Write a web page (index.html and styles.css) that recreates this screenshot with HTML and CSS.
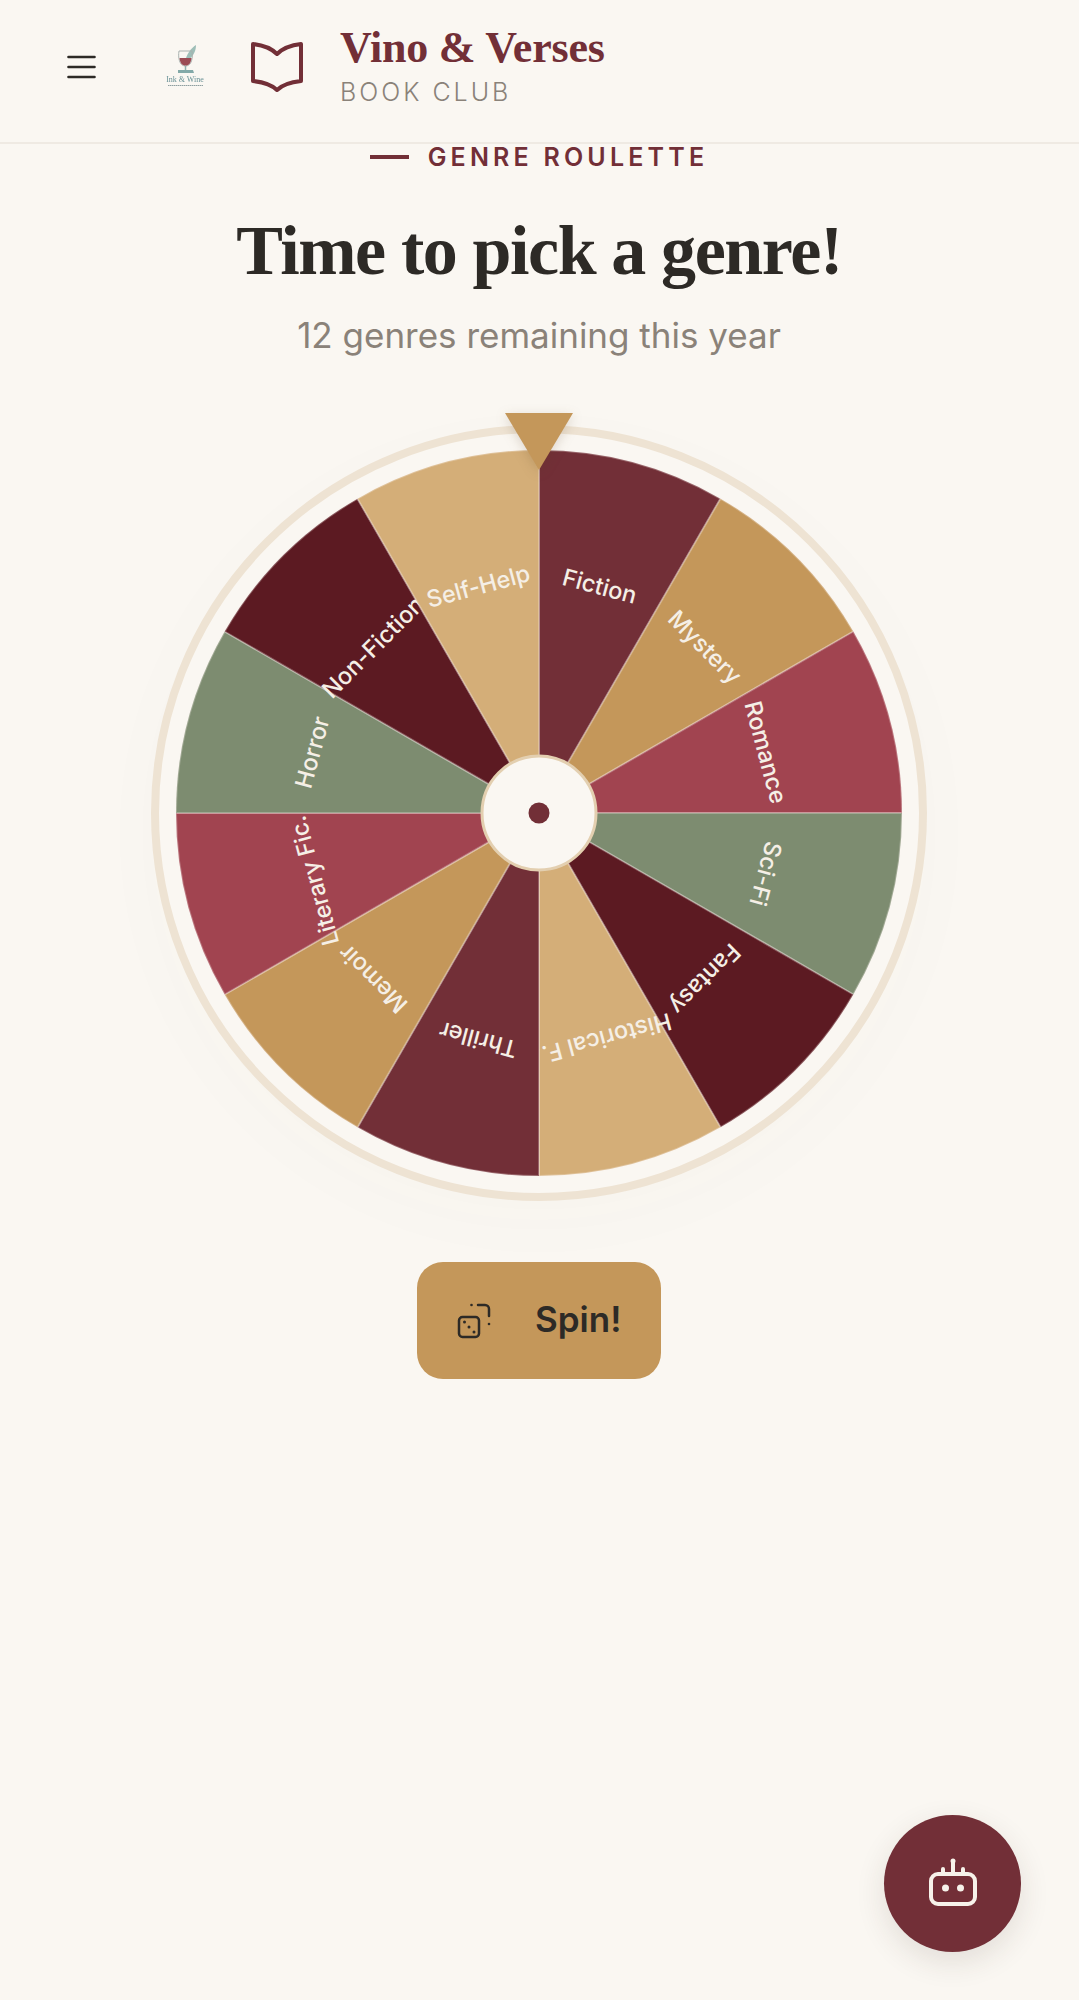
FILE: index.html
```html
<!DOCTYPE html>
<html lang="en">
<head>
<meta charset="utf-8">
<title>Vino &amp; Verses Book Club</title>
<link rel="stylesheet" href="styles.css">
</head>
<body>
<header class="topbar">
  <button class="menu" aria-label="Menu">
    <svg width="29" height="24" viewBox="0 0 29 24"><path d="M1.5 2H27.5M1.5 12H27.5M1.5 22H27.5"/></svg>
  </button>
  <div class="brand">
    <svg class="logo" width="50" height="48" viewBox="0 0 50 48">
      <path class="quill" d="M25 20C26 13 31 6 36 3C36 9 33 16 25 20Z"/>
      <path class="glass" d="M19 9H32C33 15 32 24 25.500 24C19 24 18 15 19 9Z"/>
      <path class="wine" d="M19.500 16H31.500C31 21 29 23.500 25.500 23.500C22 23.500 20 21 19.500 16Z"/>
      <path class="stem" d="M25.500 24V28"/>
      <path class="base" d="M18 28H33L34 31H18Z"/>
      <text class="logo-name" x="25" y="40">Ink &amp; Wine</text>
      <path class="logo-tag" d="M8 43.500H43"/>
    </svg>
    <svg class="book" width="52" height="52" viewBox="0 0 52 52"><path d="M2 4C11 5 20 8 26 14C32 8 41 5 50 4V41C41 42 32 44 26 50C20 44 11 42 2 41Z"/></svg>
    <div class="brand-text">
      <div class="brand-name">Vino &amp; Verses</div>
      <div class="brand-sub">BOOK CLUB</div>
    </div>
  </div>
</header>
<main class="page">
  <div class="eyebrow"><span class="dash"></span>GENRE ROULETTE</div>
  <h1 class="title">Time to pick a genre!</h1>
  <p class="subtitle">12 genres remaining this year</p>
  <div class="wheel-ring">
    <svg class="pointer" width="68" height="57" viewBox="0 0 68 57"><path d="M0 0H68L34 57Z"/></svg>
    <svg class="wheel" width="728" height="728" viewBox="-364 -364 728 728">
      <g><path class="seg c1" d="M0 0V-363A363 363 0 0 1 181.500 -314.370Z"/><text class="lab" transform="rotate(15) translate(0 -235)">Fiction</text></g>
      <g transform="rotate(30)"><path class="seg c2" d="M0 0V-363A363 363 0 0 1 181.500 -314.370Z"/><text class="lab" transform="rotate(15) translate(0 -235)">Mystery</text></g>
      <g transform="rotate(60)"><path class="seg c3" d="M0 0V-363A363 363 0 0 1 181.500 -314.370Z"/><text class="lab" transform="rotate(15) translate(0 -235)">Romance</text></g>
      <g transform="rotate(90)"><path class="seg c4" d="M0 0V-363A363 363 0 0 1 181.500 -314.370Z"/><text class="lab" transform="rotate(15) translate(0 -235)">Sci-Fi</text></g>
      <g transform="rotate(120)"><path class="seg c5" d="M0 0V-363A363 363 0 0 1 181.500 -314.370Z"/><text class="lab" transform="rotate(15) translate(0 -235)">Fantasy</text></g>
      <g transform="rotate(150)"><path class="seg c6" d="M0 0V-363A363 363 0 0 1 181.500 -314.370Z"/><text class="lab" transform="rotate(15) translate(0 -235)">Historical F...</text></g>
      <g transform="rotate(180)"><path class="seg c1" d="M0 0V-363A363 363 0 0 1 181.500 -314.370Z"/><text class="lab" transform="rotate(15) translate(0 -235)">Thriller</text></g>
      <g transform="rotate(210)"><path class="seg c2" d="M0 0V-363A363 363 0 0 1 181.500 -314.370Z"/><text class="lab" transform="rotate(15) translate(0 -235)">Memoir</text></g>
      <g transform="rotate(240)"><path class="seg c3" d="M0 0V-363A363 363 0 0 1 181.500 -314.370Z"/><text class="lab" transform="rotate(15) translate(0 -235)">Literary Fic...</text></g>
      <g transform="rotate(270)"><path class="seg c4" d="M0 0V-363A363 363 0 0 1 181.500 -314.370Z"/><text class="lab" transform="rotate(15) translate(0 -235)">Horror</text></g>
      <g transform="rotate(300)"><path class="seg c5" d="M0 0V-363A363 363 0 0 1 181.500 -314.370Z"/><text class="lab" transform="rotate(15) translate(0 -235)">Non-Fiction</text></g>
      <g transform="rotate(330)"><path class="seg c6" d="M0 0V-363A363 363 0 0 1 181.500 -314.370Z"/><text class="lab" transform="rotate(15) translate(0 -235)">Self-Help</text></g>
      <circle class="hub" r="57"/>
      <circle class="hub-dot" r="10.500"/>
    </svg>
  </div>
  <button class="spin">
    <svg class="dice" width="36" height="38" viewBox="0 0 36 38">
      <rect class="dice-line" x="3" y="15" width="20" height="20" rx="3.500"/>
      <path class="dice-line" d="M22 3H29A4 4 0 0 1 33 7V14"/>
      <circle class="dice-dot" cx="8.500" cy="20" r="1.500"/>
      <circle class="dice-dot" cx="13" cy="25" r="1.500"/>
      <circle class="dice-dot" cx="18" cy="30" r="1.500"/>
      <circle class="dice-dot" cx="15.500" cy="3" r="1.300"/>
      <circle class="dice-dot" cx="33" cy="22" r="1.300"/>
    </svg>
    <span class="spin-label">Spin!</span>
  </button>
</main>
<button class="fab" aria-label="Assistant">
  <svg width="52" height="52" viewBox="0 0 52 52">
    <rect class="bot" x="4" y="16" width="44" height="30" rx="7"/>
    <path class="bot" d="M16 11V16M36 11V16M26 4V14"/>
    <circle class="bot-fill" cx="26" cy="3" r="2.500"/>
    <circle class="bot-fill" cx="18.500" cy="30" r="3.500"/>
    <circle class="bot-fill" cx="33.500" cy="30" r="3.500"/>
  </svg>
</button>
</body>
</html>
```
FILE: styles.css
```css
* { box-sizing: border-box; }
html, body { margin: 0; padding: 0; }
body {
  height: 2000px;
  overflow: hidden;
  background: #faf7f2;
  color: #2d2a26;
  font-family: "Inter", "Liberation Sans", sans-serif;
}
button { border: 0; padding: 0; background: none; font: inherit; color: inherit; }

.topbar {
  display: flex;
  align-items: center;
  gap: 67px;
  height: 144px;
  padding: 0 0 10px 67px;
  border-bottom: 2px solid #efeae3;
}
.menu { display: flex; width: 29px; height: 24px; margin-top: 2px; }
.menu path { fill: none; stroke: #2d2a26; stroke-width: 2.6; stroke-linecap: round; }
.brand { display: flex; align-items: center; }
.logo { margin-left: -3px; margin-right: 41px; opacity: .85; filter: blur(.4px); }
.quill { fill: #8fb5ae; }
.glass { fill: none; stroke: #9aa5a3; stroke-width: 1; }
.wine { fill: #8c2f3a; }
.stem { stroke: #7fa5a3; stroke-width: 1.500; }
.base { fill: #6f9c9c; }
.logo-name { font: 8px "Liberation Serif", serif; fill: #4f7f85; text-anchor: middle; }
.logo-tag { stroke: #7d9092; stroke-width: 1; stroke-dasharray: 1.500 .5; }
.book { margin-right: 37px; }
.book path { fill: none; stroke: #722f37; stroke-width: 4; stroke-linejoin: round; }
.brand-text { display: flex; flex-direction: column; }
.brand-name {
  margin-top: -3px;
  font: 700 44px/50px "Liberation Serif", serif;
  letter-spacing: -.2px;
  color: #722f37;
}
.brand-sub {
  margin-top: 4px;
  font-size: 25px;
  line-height: 30px;
  letter-spacing: 3px;
  font-weight: 300;
  color: #8a8279;
}

.page { display: flex; flex-direction: column; align-items: center; padding-right: 1px; }
.eyebrow {
  display: flex;
  align-items: center;
  gap: 19px;
  margin-top: -1px;
  font-size: 25px;
  line-height: 28px;
  font-weight: 600;
  letter-spacing: 4.200px;
  color: #722f37;
}
.dash { width: 39px; height: 4px; background: #722f37; }
.title {
  margin: 40px 0 0;
  font: 700 70px/80px "Liberation Serif", serif;
  color: #2d2a26;
  letter-spacing: -1.400px;
}
.subtitle {
  margin: 22px 0 0;
  font-size: 35px;
  line-height: 44px;
  color: #8a8279;
}
.wheel-ring {
  position: relative;
  margin-top: 68px;
  width: 776px;
  height: 776px;
  padding: 16px;
  border: 8px solid #eee3d3;
  border-radius: 50%;
  background: #faf7f2;
  box-shadow: 0 20px 80px rgba(120, 90, 50, .02);
}
.wheel { display: block; }
.pointer {
  position: absolute;
  top: -20px;
  left: 346px;
  z-index: 1;
  filter: drop-shadow(0 3px 6px rgba(90, 60, 30, .18));
}
.pointer path { fill: #c4975a; }
.seg { stroke: rgba(250, 246, 240, .28); stroke-width: 2; }
.c1 { fill: #722f37; }
.c2 { fill: #c4975a; }
.c3 { fill: #a14450; }
.c4 { fill: #7d8c70; }
.c5 { fill: #5c1a22; }
.c6 { fill: #d4ae78; }
.lab {
  font-size: 23.500px;
  font-weight: 500;
  fill: #f5efe6;
  text-anchor: middle;
  dominant-baseline: central;
}
.hub { fill: #faf7f2; stroke: #e3cfb0; stroke-width: 3; }
.hub-dot { fill: #722f37; }

.spin {
  display: flex;
  align-items: center;
  gap: 43px;
  width: 244px;
  height: 117px;
  margin-top: 61px;
  padding-left: 39px;
  border-radius: 26px;
  background: #c4975a;
  font-size: 35px;
  font-weight: 600;
  color: #2d2a26;
}
.dice { flex: none; }
.spin-label { margin-top: -4px; }
.dice-line { fill: none; stroke: #2d2a26; stroke-width: 2.500; stroke-linecap: round; }
.dice-dot { fill: #2d2a26; }

.fab {
  position: fixed;
  left: 884px;
  top: 1815px;
  display: flex;
  align-items: center;
  justify-content: center;
  width: 137px;
  height: 137px;
  border-radius: 50%;
  background: #722f37;
  box-shadow: 0 10px 30px rgba(60, 40, 30, .12);
}
.bot { fill: none; stroke: #f7f2ea; stroke-width: 4; stroke-linecap: round; }
.bot-fill { fill: #f7f2ea; }
```
